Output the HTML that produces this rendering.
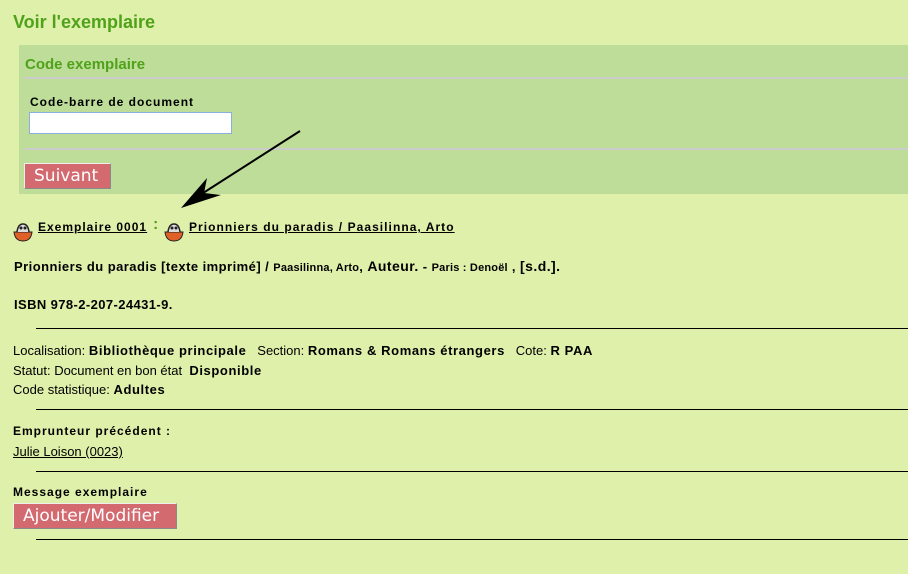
<!DOCTYPE html>
<html><head><meta charset="utf-8"><style>
body{margin:0;width:908px;height:574px;background:#dff0aa;font-family:"Liberation Sans",sans-serif;position:relative;overflow:hidden;color:#000}
.a{position:absolute;white-space:nowrap}
.b{font-weight:bold;font-size:12px;letter-spacing:1px}
.v{font-weight:bold;font-size:13px;letter-spacing:0.6px}
.n{font-size:13px}
.btn{position:absolute;background:#d26a70;color:#fff;font-family:"DejaVu Sans",sans-serif;font-size:17px;border:1px solid #8a8a8a;border-top-color:#eee;border-left-color:#eee;box-sizing:border-box;line-height:24px;padding-left:9px}
.hr{position:absolute;left:36px;width:872px;height:1px;background:#000}
u{text-decoration:underline}
</style></head><body>
<div class="a" style="left:13px;top:12px;font-size:18px;font-weight:bold;color:#4fa21a">Voir l'exemplaire</div>
<div class="a" style="left:19px;top:45px;width:889px;height:149px;background:#bddd99"></div>
<div class="a" style="left:25px;top:56px;font-size:15px;font-weight:bold;color:#4fa21a">Code exemplaire</div>
<div class="a" style="left:24px;top:77px;width:884px;height:2px;background:#ccc"></div>
<div class="a b" style="left:30px;top:95px">Code-barre de document</div>
<div class="a" style="left:29px;top:112px;width:203px;height:22px;background:#fff;border:1px solid #8aaee0;box-sizing:border-box"></div>
<div class="a" style="left:24px;top:148px;width:884px;height:2px;background:#ccc"></div>
<div class="btn" style="left:24px;top:163px;width:87px;height:26px">Suivant</div>
<svg class="a" style="left:0;top:0" width="908" height="574"><line x1="300" y1="131" x2="200" y2="195" stroke="#000" stroke-width="2"/><polygon points="181,208 207,178 204,193 221,195" fill="#000"/></svg>
<svg class="a" style="left:13px;top:220px" width="20" height="22"><path d="M1 12 L19 12 Q18 21 10 21 Q2 21 1 12Z" fill="#e0602a" stroke="#222"/><path d="M4 12 Q5 4 10 4 Q15 4 16 12" fill="#ddd" stroke="#222" stroke-width="1.5"/><circle cx="8" cy="8" r="1.5" fill="#222"/><circle cx="12" cy="8" r="1.5" fill="#222"/></svg>
<div class="a b" style="left:38px;top:220px"><u>Exemplaire 0001</u></div>
<div class="a" style="left:153px;top:216px;color:#4fa21a;font-weight:bold;font-size:16px">:</div>
<svg class="a" style="left:164px;top:220px" width="20" height="22"><path d="M1 12 L19 12 Q18 21 10 21 Q2 21 1 12Z" fill="#e0602a" stroke="#222"/><path d="M4 12 Q5 4 10 4 Q15 4 16 12" fill="#ddd" stroke="#222" stroke-width="1.5"/><circle cx="8" cy="8" r="1.5" fill="#222"/><circle cx="12" cy="8" r="1.5" fill="#222"/></svg>
<div class="a b" style="left:189px;top:220px;letter-spacing:1.05px"><u>Prionniers du paradis / Paasilinna, Arto</u></div>
<div class="a" style="left:14px;top:258px;font-size:13px;font-weight:bold;letter-spacing:0.45px">Prionniers du paradis [texte imprimé] / <span style="font-size:11px;letter-spacing:0.2px">Paasilinna, Arto</span>, <span style="font-size:14px">Auteur.</span> - <span style="font-size:11px;letter-spacing:0.2px">Paris : Denoël</span> , <span style="font-size:14px">[s.d.].</span></div>
<div class="a" style="left:14px;top:297px;font-size:13px;font-weight:bold;letter-spacing:0.4px">ISBN 978-2-207-24431-9.</div>
<div class="hr" style="top:328px"></div>
<div class="a n" style="left:13px;top:343px">Localisation: <span class="v">Bibliothèque principale</span> &nbsp; Section: <span class="v">Romans &amp; Romans étrangers</span> &nbsp; Cote: <span class="v">R PAA</span></div>
<div class="a n" style="left:13px;top:363px">Statut: Document en bon état &nbsp;<span class="v">Disponible</span></div>
<div class="a n" style="left:13px;top:382px">Code statistique: <span class="v">Adultes</span></div>
<div class="hr" style="top:409px"></div>
<div class="a b" style="left:13px;top:424px">Emprunteur précédent :</div>
<div class="a n" style="left:13px;top:444px"><u>Julie Loison (0023)</u></div>
<div class="hr" style="top:471px"></div>
<div class="a b" style="left:13px;top:485px">Message exemplaire</div>
<div class="btn" style="left:13px;top:503px;width:164px;height:26px">Ajouter/Modifier</div>
<div class="hr" style="top:539px"></div>
</body></html>
